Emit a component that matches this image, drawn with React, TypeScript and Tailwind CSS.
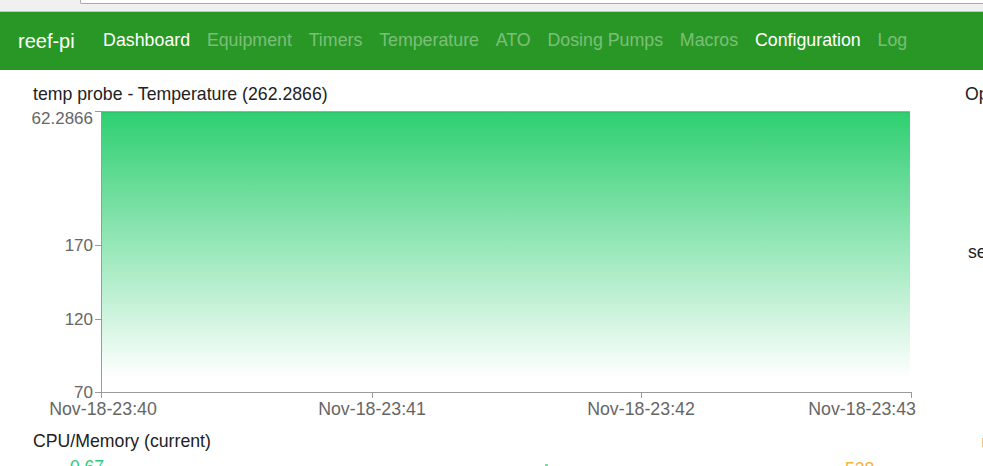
import React from "react";

const navItems = [
  { label: "Dashboard", active: true },
  { label: "Equipment" },
  { label: "Timers" },
  { label: "Temperature" },
  { label: "ATO" },
  { label: "Dosing Pumps" },
  { label: "Macros" },
  { label: "Configuration", active: true },
  { label: "Log" },
];

const font = { fontFamily: '"Liberation Sans", Arial, sans-serif' };

function TempChart() {
  const yTicks = [
    { v: "262.2866", y: 111, ly: 118 },
    { v: "170", y: 245, ly: 245 },
    { v: "120", y: 319, ly: 319 },
    { v: "70", y: 392, ly: 392 },
  ];
  const xTicks = [
    { v: "Nov-18-23:40", x: 101, lx: 103, anchor: "middle" },
    { v: "Nov-18-23:41", x: 372, lx: 372, anchor: "middle" },
    { v: "Nov-18-23:42", x: 641, lx: 641, anchor: "middle" },
    { v: "Nov-18-23:43", x: 911, lx: 916, anchor: "end" },
  ];
  return (
    <svg width={898} height={322} viewBox="32 104 898 322" className="block" style={font}>
      <defs>
        <linearGradient id="tempFill" x1="0" y1="0" x2="0" y2="1">
          <stop offset="0%" stopColor="#2ecf71" stopOpacity={1} />
          <stop offset="95%" stopColor="#2ecf71" stopOpacity={0} />
        </linearGradient>
      </defs>
      <rect x={101} y={112} width={809} height={280} fill="url(#tempFill)" />
      <line x1={101} y1={112} x2={910} y2={112} stroke="#2fc06a" strokeWidth={1.5} />
      <line x1={101.5} y1={111} x2={101.5} y2={392} stroke="#9a9a9a" />
      <line x1={101} y1={392.5} x2={911} y2={392.5} stroke="#9a9a9a" />
      {yTicks.map((t) => (
        <g key={t.v}>
          <line x1={95} y1={t.y + 0.5} x2={101} y2={t.y + 0.5} stroke="#9a9a9a" />
          <text x={93} y={t.ly + 6} textAnchor="end" fontSize={17} fill="#666">
            {t.v}
          </text>
        </g>
      ))}
      {xTicks.map((t) => (
        <g key={t.v}>
          <line x1={t.x + 0.5} y1={392} x2={t.x + 0.5} y2={398} stroke="#9a9a9a" />
          <text
            x={t.lx}
            y={415}
            textAnchor={t.anchor as "middle" | "end"}
            fontSize={17.8}
            fill="#666"
          >
            {t.v}
          </text>
        </g>
      ))}
    </svg>
  );
}

function CpuChart() {
  return (
    <svg width={951} height={20} viewBox="32 451 951 20" className="block" style={font}>
      <text x={70} y={473} fontSize={17.5} fill="#2ecc71">
        0.67
      </text>
      <rect x={545} y={464} width={3} height={2} fill="#7bdc9f" />
      <text x={845} y={475} fontSize={17.5} fill="#f5b041">
        528
      </text>
    </svg>
  );
}

export default function App() {
  return (
    <div className="h-[466px] w-[983px] overflow-hidden bg-white" style={font}>
      <div className="h-[12px] border-b border-[#c6c6c6] bg-[#f0f0f0]">
        <div className="ml-[80px] h-[4px] rounded-bl-[2px] border-b border-l border-[#a9a9a9] bg-white" />
      </div>
      <nav className="flex h-[58px] items-center bg-[#299725] pl-[18px]">
        <span className="mr-[20px] text-[20px] leading-none text-white">reef-pi</span>
        <ul className="flex items-center">
          {navItems.map((n) => (
            <li
              key={n.label}
              className={
                "whitespace-nowrap px-[8.4px] text-[17.8px] leading-none " +
                (n.active ? "text-white" : "text-white/40")
              }
            >
              {n.label}
            </li>
          ))}
        </ul>
      </nav>
      <div className="flex pt-[14px]">
        <div className="w-[951px] flex-none pl-[32px]">
          <div className="h-[20px] pl-px text-[17.7px] leading-[20px] text-[#222]">
            temp probe - Temperature (262.2866)
          </div>
          <TempChart />
          <div className="mt-[5px] h-[20px] pl-px text-[17.7px] leading-[20px] text-[#222]">
            CPU/Memory (current)
          </div>
          <CpuChart />
        </div>
        <div className="w-[200px] flex-none pl-[14px] text-[17.7px] leading-[20px] text-[#222]">
          <div className="whitespace-nowrap">Operation</div>
          <div className="mt-[138px] whitespace-nowrap pl-[3px]">sensor</div>
          <div className="mt-[176px] pl-[17px]">
            <div className="h-[9px] w-[2px] bg-[#f5c27a]" />
          </div>
        </div>
      </div>
    </div>
  );
}
